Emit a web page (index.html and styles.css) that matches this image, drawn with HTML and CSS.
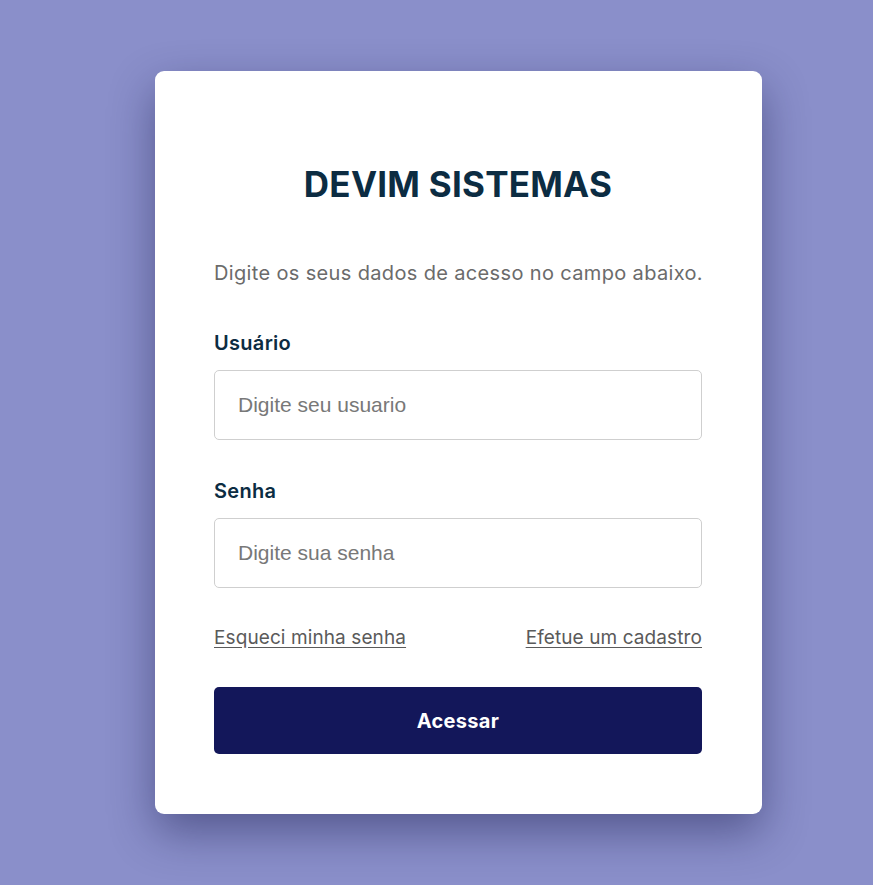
FILE: index.html
```html
<!DOCTYPE html>
<html lang="pt-BR">
<head>
<meta charset="utf-8">
<title>DEVIM SISTEMAS - Login</title>
<link rel="stylesheet" href="styles.css">
</head>
<body>
<main class="page">
  <form class="card">
    <h1 class="title">DEVIM SISTEMAS</h1>
    <p class="intro">Digite os seus dados de acesso no campo abaixo.</p>
    <label class="label" for="user">Usuário</label>
    <input class="field" id="user" type="text" placeholder="Digite seu usuario">
    <label class="label label-second" for="pass">Senha</label>
    <input class="field" id="pass" type="password" placeholder="Digite sua senha">
    <div class="links">
      <a href="#" class="link">Esqueci minha senha</a>
      <a href="#" class="link">Efetue um cadastro</a>
    </div>
    <button type="button" class="btn">Acessar</button>
  </form>
</main>
</body>
</html>
```
FILE: styles.css
```css
* { box-sizing: border-box; }
html, body { margin: 0; padding: 0; }
body {
  background: #8a8fca;
  font-family: Inter, "Noto Sans", sans-serif;
  min-height: 885px;
}
.page {
  padding: 71px 0 0 155px;
}
.card {
  width: 607px;
  background: #fff;
  border-radius: 9px;
  padding: 93px 60px 60px 59px;
  display: flex;
  flex-direction: column;
  box-shadow: 0 18px 45px rgba(20, 22, 70, 0.45);
}
.title {
  margin: 0;
  text-align: center;
  font-size: 35px;
  line-height: 40px;
  font-weight: 700;
  color: #0c2c42;
  letter-spacing: 0.25px;
}
.intro {
  margin: 57px 0 0;
  font-size: 20px;
  line-height: 24px;
  letter-spacing: 0.35px;
  white-space: nowrap;
  color: #6b6b6b;
}
.label {
  margin-top: 46px;
  font-size: 20px;
  line-height: 24px;
  letter-spacing: 0.3px;
  font-weight: 600;
  color: #0c2c42;
}
.label-second { margin-top: 39px; }
.field {
  margin-top: 15px;
  height: 70px;
  width: 100%;
  border: 1.5px solid #cfcfcf;
  border-radius: 5px;
  padding: 0 0 0 23px;
  font-family: "Liberation Sans", Arial, sans-serif;
  font-size: 21px;
  color: #333;
  outline: none;
}
.field::placeholder { color: #787878; }
.links {
  margin-top: 38px;
  display: flex;
  justify-content: space-between;
  font-size: 19px;
  line-height: 24px;
  letter-spacing: 0.1px;
}
.link {
  color: #5a5a5a;
  text-decoration: underline;
  text-underline-offset: 3px;
}
.btn {
  margin-top: 37px;
  height: 67px;
  width: 100%;
  border: none;
  border-radius: 5px;
  background: #13175a;
  color: #fff;
  font-family: Inter, "Noto Sans", sans-serif;
  font-size: 20px;
  letter-spacing: 0.3px;
  font-weight: 700;
  cursor: pointer;
}
```
